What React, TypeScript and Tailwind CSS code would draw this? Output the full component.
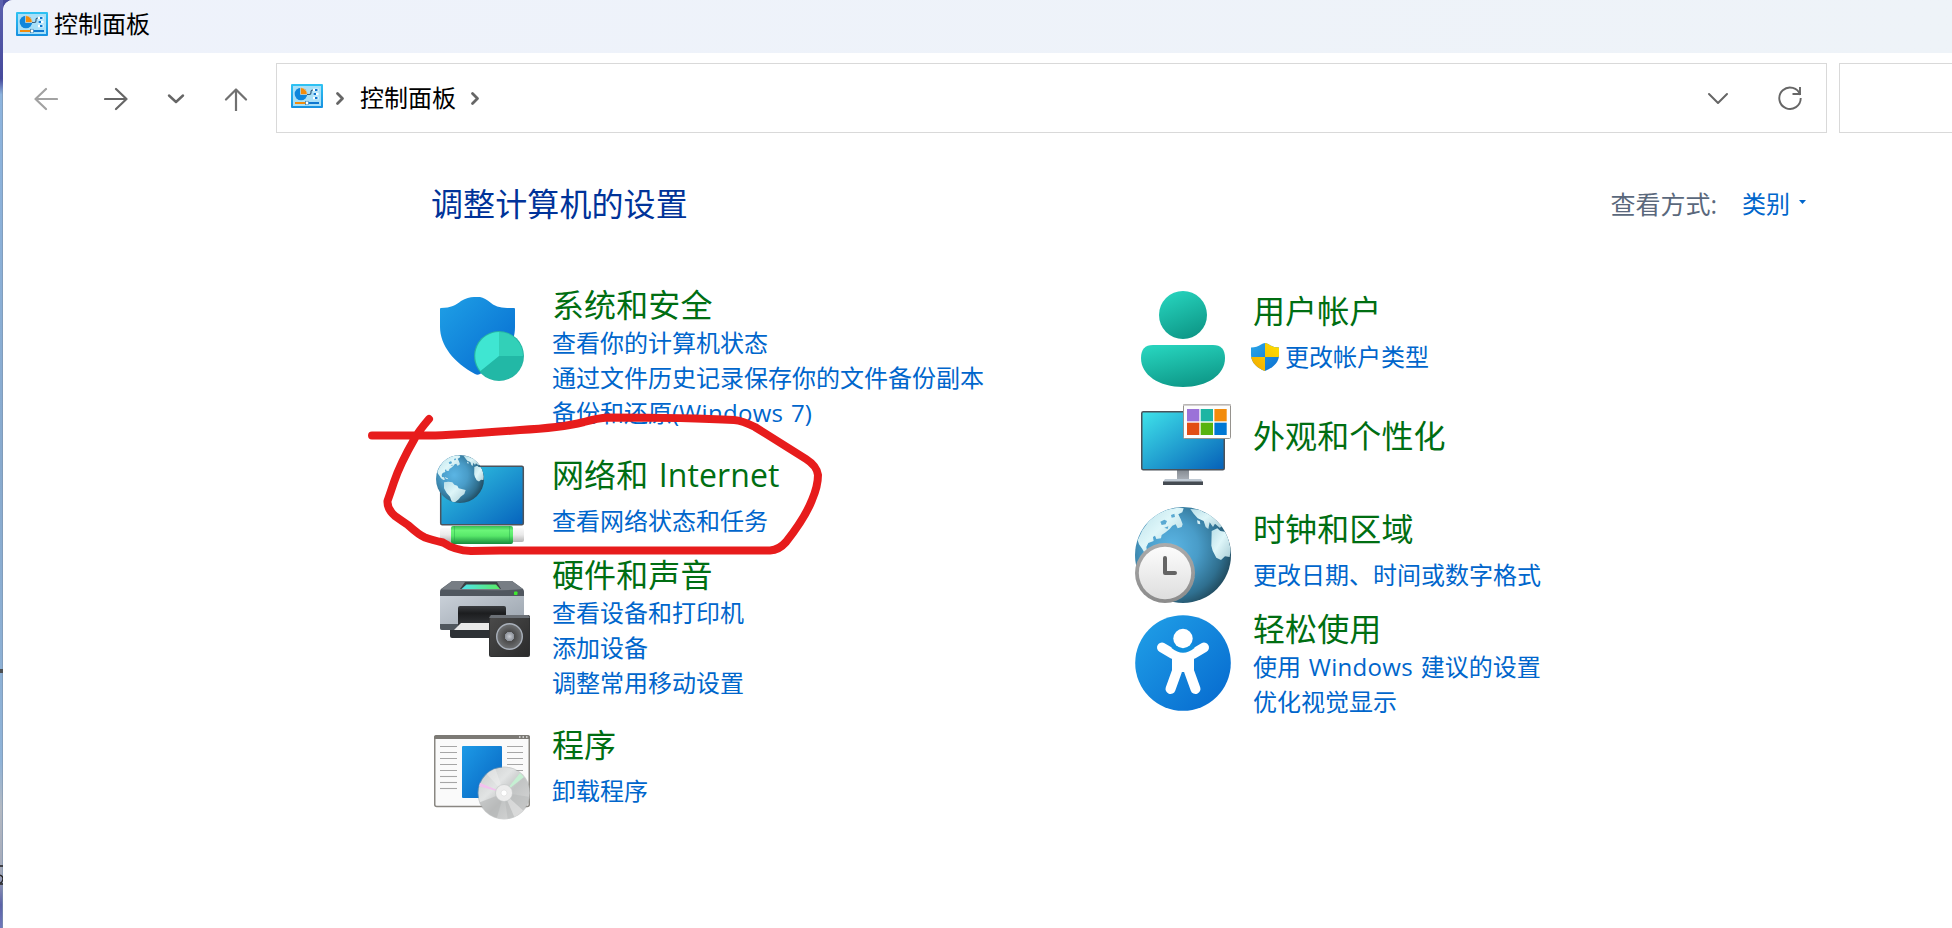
import type { ReactNode } from "react";

const LAND = [
  "M66 22 L96 8 L128 2 L146 4 L142 16 L130 22 L137 36 L143 52 L140 60 L128 64 L122 52 L112 56 L104 66 L92 76 L80 84 L78 94 L64 96 L60 86 L54 90 L56 102 L40 108 L34 120 L36 132 L48 134 L54 148 L44 150 L30 140 L22 126 L12 112 L8 100 L22 70 L42 42 Z",
  "M48 164 L74 160 L98 164 L110 178 L128 184 L136 200 L178 210 L170 234 L148 250 L136 266 L118 280 L98 286 L90 268 L84 250 L64 228 L48 200 Z",
  "M166 6 L196 8 L206 16 L228 22 L248 44 L262 58 L254 62 L240 50 L234 60 L224 46 L220 66 L212 60 L206 42 L188 34 L176 20 Z",
  "M230 72 L247 64 L256 72 L270 74 L280 94 L287 128 L284 150 L270 148 L258 159 L244 152 L233 131 L229 116 Z",
];

function Globe({ id }: { id: string }) {
  return (
    <g>
      <defs>
        <radialGradient id={id} cx="38%" cy="42%" r="70%">
          <stop offset="0" stopColor="#5bb5e4" />
          <stop offset="0.4" stopColor="#499cc8" />
          <stop offset="0.75" stopColor="#2f6f8f" />
          <stop offset="1" stopColor="#1b3c4b" />
        </radialGradient>
        <linearGradient id={id + "-land"} x1="0" y1="0" x2="1" y2="1">
          <stop offset="0" stopColor="#b9dfe8" />
          <stop offset="0.45" stopColor="#def6f9" />
          <stop offset="1" stopColor="#a9cdd6" />
        </linearGradient>
        <clipPath id={id + "-clip"}>
          <circle cx="144" cy="144" r="144" />
        </clipPath>
      </defs>
      <circle cx="144" cy="144" r="144" fill={`url(#${id})`} />
      <g clipPath={`url(#${id}-clip)`}>
        {LAND.map((d) => (
          <path key={d} d={d} fill={`url(#${id}-land)`} />
        ))}
        <path d="M76 44 L88 38 L96 42 L92 52 L80 54 Z M108 24 L118 20 L120 30 L110 32 Z M88 62 L100 58 L98 66 Z" fill="#5aa9d2" />
        <path d="M52 132 L70 140 L74 146 L60 142 Z M186 40 L194 42 L196 52 L188 50 Z" fill="#d6eff5" />
      </g>
    </g>
  );
}

function Icon({ children, className = "" }: { children: ReactNode; className?: string }) {
  return (
    <svg viewBox="0 0 96 96" className={`h-24 w-24 shrink-0 ${className}`}>
      {children}
    </svg>
  );
}

function SecurityIcon() {
  return (
    <Icon className="mt-1.5">
      <defs>
        <linearGradient id="sec" x1="0" y1="0" x2="1" y2="1">
          <stop offset="0" stopColor="#1fa0e6" />
          <stop offset="1" stopColor="#0569cf" />
        </linearGradient>
      </defs>
      <path d="M6 18 Q6 17 7 17 C17 17 22 14 27 10 Q34 6 40 6 H46 Q51 7 57 12 C63 17 70 17 80 17 Q81 17 81 18 V36 C81 58 64 74 46 83 Q43.500 84.500 41 83 C20 72 6 54 6 36 Z" fill="url(#sec)" />
      <circle cx="65" cy="65" r="25" fill="#28b5a4" />
      <circle cx="65" cy="65" r="24" fill="#22b8a6" />
      <path d="M65 65 V41 A24 24 0 0 1 89 65 Z" fill="#32d0b8" />
      <path d="M65 65 V41 A24 24 0 0 0 46.500 80 Z" fill="#3fe6d2" />
    </Icon>
  );
}

function NetworkIcon() {
  return (
    <Icon>
      <defs>
        <linearGradient id="net" x1="0" y1="0" x2="1" y2="1">
          <stop offset="0" stopColor="#35cbe4" />
          <stop offset="1" stopColor="#0663bd" />
        </linearGradient>
        <linearGradient id="cable" x1="0" y1="0" x2="0" y2="1">
          <stop offset="0" stopColor="#38bd55" />
          <stop offset="0.25" stopColor="#6af578" />
          <stop offset="0.55" stopColor="#58e86a" />
          <stop offset="1" stopColor="#168a3c" />
        </linearGradient>
        <linearGradient id="plug" x1="0" y1="0" x2="0" y2="1">
          <stop offset="0" stopColor="#fafafa" />
          <stop offset="0.5" stopColor="#e9e9e9" />
          <stop offset="1" stopColor="#b5b5b5" />
        </linearGradient>
      </defs>
      <rect x="6.700" y="15.200" width="82.600" height="58.600" rx="1.500" fill="url(#net)" stroke="#4c535c" strokeWidth="1.500" />
      <rect x="6" y="77" width="84" height="14" rx="2" fill="url(#plug)" />
      <rect x="17" y="75" width="62" height="18" rx="2" fill="url(#cable)" />
      <path d="M20.500 75 V93 M75.500 75 V93" stroke="#1f9d45" strokeOpacity="0.500" strokeWidth="0.800" />
      <g transform="translate(2 4) scale(0.166667)">
        <Globe id="globe-net" />
      </g>
    </Icon>
  );
}

function HardwareIcon() {
  return (
    <Icon className="mt-4">
      <defs>
        <linearGradient id="prn" x1="0" y1="0" x2="1" y2="1">
          <stop offset="0" stopColor="#ccd3db" />
          <stop offset="1" stopColor="#98a1ab" />
        </linearGradient>
        <linearGradient id="scr" x1="0" x2="1">
          <stop offset="0" stopColor="#4fe3ee" />
          <stop offset="1" stopColor="#58ea62" />
        </linearGradient>
        <linearGradient id="slot" x1="0" y1="0" x2="0" y2="1">
          <stop offset="0" stopColor="#3a3d40" />
          <stop offset="0.300" stopColor="#1c1d1f" />
          <stop offset="1" stopColor="#3c3f43" />
        </linearGradient>
        <linearGradient id="spk" x1="0" y1="0" x2="1" y2="1">
          <stop offset="0" stopColor="#4a4a4a" />
          <stop offset="1" stopColor="#2b2b2b" />
        </linearGradient>
        <radialGradient id="cone">
          <stop offset="0" stopColor="#c9ccd2" />
          <stop offset="0.360" stopColor="#8b9098" />
          <stop offset="0.370" stopColor="#4a4a4a" />
          <stop offset="1" stopColor="#707274" />
        </radialGradient>
      </defs>
      <path d="M6 20 H90 V56 Q90 59 87 59 H8 Q6 59 6 57 Z" fill="url(#prn)" />
      <path d="M6 53 H25 V59 H8 Q6 59 6 57 Z" fill="#50575e" />
      <path d="M18 10 H78 L89 18 Q90 19 90 21 V25 H6 V21 Q6 19 7 18 Z" fill="#50575f" />
      <path d="M18 10 H78 L89 18 Q80 20 7 18.500 Z" fill="#777d84" />
      <path d="M31 11 H63 L67 18 H26 Z" fill="#3b4045" />
      <path d="M32.500 13.500 H62 L66 18 H27.500 Z" fill="url(#scr)" />
      <rect x="80" y="20.500" width="3.500" height="3.500" rx="0.800" fill="#3eea2f" />
      <rect x="24" y="35" width="48" height="24" rx="2" fill="url(#slot)" />
      <path d="M16 59 H60 V67 H18 Q16 67 16 65 Z" fill="#2d3135" />
      <path d="M27 52 H66 V59 H20 Z" fill="#e9e9e9" />
      <rect x="55" y="44" width="41" height="42" rx="2" fill="#303132" />
      <path d="M57 44 H94 L96 47 H55 Z" fill="#6b7076" />
      <rect x="56" y="47" width="39" height="38" rx="1" fill="url(#spk)" />
      <circle cx="75.500" cy="65.500" r="12.800" fill="url(#cone)" stroke="#a9b0ba" strokeWidth="1.400" />
    </Icon>
  );
}

function ProgramsIcon() {
  const rows = [0, 1, 2, 3, 4, 5, 6, 7];
  return (
    <Icon className="mt-1.5">
      <defs>
        <linearGradient id="prg" x1="0" y1="0" x2="1" y2="1">
          <stop offset="0" stopColor="#1d9ae6" />
          <stop offset="1" stopColor="#0663c0" />
        </linearGradient>
        <linearGradient id="disc" x1="0" y1="0" x2="1" y2="1">
          <stop offset="0" stopColor="#c7c9c9" />
          <stop offset="0.350" stopColor="#e2e4e4" />
          <stop offset="0.550" stopColor="#c2c4c4" />
          <stop offset="1" stopColor="#dadada" />
        </linearGradient>
        <clipPath id="disc-clip">
          <circle cx="70" cy="62" r="26" />
        </clipPath>
      </defs>
      <rect x="0.750" y="5" width="94.500" height="70.500" rx="2" fill="#fafafa" stroke="#8a8782" strokeWidth="1.500" />
      <path d="M0 8 V6 Q0 4 2 4 H94 Q96 4 96 6 V8 Z" fill="#7c7a75" />
      <path d="M85 6 h1.500 M88.500 6 h1.500 M92 6 h1.500" stroke="#e5e5e5" strokeWidth="1.500" />
      {rows.map((r) => (
        <path key={r} d={`M6 ${15.5 + r * 6} H23 ${r < 5 ? `M73 ${15.5 + r * 6} H89` : ""}`} stroke="#a6a6a6" strokeWidth="1.100" />
      ))}
      <rect x="28" y="15" width="40" height="52" rx="1" fill="url(#prg)" />
      <circle cx="70" cy="62" r="26.500" fill="#9fa3a3" opacity="0.500" />
      <circle cx="70" cy="62" r="25.600" fill="url(#disc)" />
      <g clipPath="url(#disc-clip)">
        <path d="M70 62 L96 66 V90 H74 Z" fill="#b4b6b6" opacity="0.450" />
        <path d="M70 62 L44 72 L48 90 H62 Z" fill="#b2b4b4" opacity="0.600" />
        <path d="M70 62 L82 90 L92 82 Z" fill="#f0f0f0" opacity="0.500" />
        <path d="M70 62 L50 40 L60 34 Z" fill="#f2f2f2" opacity="0.400" />
        <path d="M70 62 L44 51 L44 55 Z" fill="#f3c1ee" />
        <path d="M70 62 L86 42 L90 46 Z" fill="#c5efd2" />
      </g>
      <circle cx="70" cy="62" r="8.500" fill="#ececec" stroke="#bfc2c2" strokeWidth="0.600" />
      <circle cx="70" cy="62" r="3" fill="#fff" stroke="#dcdcdc" strokeWidth="0.600" />
    </Icon>
  );
}

function UserIcon() {
  return (
    <Icon>
      <defs>
        <linearGradient id="usr" x1="0.300" y1="0" x2="0.700" y2="1">
          <stop offset="0" stopColor="#26d2bc" />
          <stop offset="1" stopColor="#0d9686" />
        </linearGradient>
      </defs>
      <circle cx="48" cy="24" r="24" fill="url(#usr)" />
      <path d="M18 54 H78 Q90 54 90 67 C90 84 72 96 48 96 S6 84 6 67 Q6 54 18 54 Z" fill="url(#usr)" />
    </Icon>
  );
}

function AppearanceIcon() {
  const tiles = ["#9b72d8", "#1db5a3", "#f28c0c", "#e24e14", "#57b30f", "#0078d4"];
  return (
    <Icon>
      <defs>
        <linearGradient id="mon" x1="0" y1="0" x2="1" y2="1">
          <stop offset="0" stopColor="#3fe3ea" />
          <stop offset="1" stopColor="#0660b8" />
        </linearGradient>
        <linearGradient id="stand" x1="0" y1="0" x2="0" y2="1">
          <stop offset="0" stopColor="#858b92" />
          <stop offset="1" stopColor="#aab0b8" />
        </linearGradient>
      </defs>
      <rect x="42" y="75" width="12" height="10" fill="url(#stand)" />
      <path d="M30 84 H66 L68 87 H28 Z" fill="#bfc9d3" />
      <rect x="28" y="86.500" width="40" height="3.500" fill="#454b52" />
      <rect x="6.750" y="16.750" width="82.500" height="58" rx="1.500" fill="url(#mon)" stroke="#4b525a" strokeWidth="1.500" />
      <rect x="48.500" y="9.500" width="47" height="34" rx="1" fill="#fdfdfd" stroke="#96938e" />
      <path d="M48 10 H96" stroke="#c4c2c0" strokeWidth="1.500" />
      {tiles.map((c, i) => (
        <rect key={c} x={52 + (i % 3) * 13.7} y={14 + Math.floor(i / 3) * 13.7} width="12.300" height="12.300" fill={c} />
      ))}
    </Icon>
  );
}

function ClockIcon() {
  return (
    <Icon>
      <defs>
        <linearGradient id="face" x1="0" y1="0" x2="0" y2="1">
          <stop offset="0" stopColor="#fcfcfc" />
          <stop offset="1" stopColor="#dedede" />
        </linearGradient>
        <linearGradient id="rim" x1="0" y1="0" x2="0" y2="1">
          <stop offset="0" stopColor="#ababab" />
          <stop offset="1" stopColor="#8b8b8b" />
        </linearGradient>
      </defs>
      <g transform="scale(0.333333)">
        <Globe id="globe-clock" />
      </g>
      <circle cx="30" cy="66" r="30" fill="url(#rim)" />
      <circle cx="30" cy="66" r="26.200" fill="url(#face)" />
      <path d="M30 51 V66 H40" fill="none" stroke="#646464" strokeWidth="4" strokeLinecap="round" strokeLinejoin="round" />
    </Icon>
  );
}

function AccessIcon() {
  return (
    <Icon className="mt-1.5">
      <defs>
        <linearGradient id="acc" x1="0" y1="0" x2="1" y2="1">
          <stop offset="0" stopColor="#21a1e8" />
          <stop offset="1" stopColor="#0568ce" />
        </linearGradient>
      </defs>
      <circle cx="48" cy="48" r="47.800" fill="url(#acc)" />
      <path d="M27 32.500 L38 39 H58 L69 32.500" fill="none" stroke="#fff" strokeWidth="10" strokeLinecap="round" strokeLinejoin="round" />
      <path d="M37 38 H59 V57 H37 Z" fill="#fff" />
      <path d="M42 56 L35.500 74 M54 56 L60.500 74" stroke="#fff" strokeWidth="10" strokeLinecap="round" />
      <path d="M36.500 33 Q48 42.500 59.500 33 L58 29 H38 Z" fill="#1190de" />
      <circle cx="48" cy="23.500" r="9.700" fill="#fff" />
    </Icon>
  );
}

function UacShield() {
  return (
    <svg viewBox="0 0 28 28" className="mr-[6px] h-7 w-7 shrink-0">
      <defs>
        <clipPath id="uac">
          <path d="M0 4.500 Q6 4.500 10 1.500 Q14 -1.500 18 1.500 Q22 4.500 28 4.500 V12 C28 20 21 25.500 14 28 C7 25.500 0 20 0 12 Z" />
        </clipPath>
        <linearGradient id="uac-b" x1="0" y1="0" x2="1" y2="1">
          <stop offset="0" stopColor="#2ba6e8" />
          <stop offset="1" stopColor="#0b6fd0" />
        </linearGradient>
        <linearGradient id="uac-y" x1="1" y1="0" x2="0" y2="1">
          <stop offset="0" stopColor="#ffe000" />
          <stop offset="1" stopColor="#f2a800" />
        </linearGradient>
      </defs>
      <g clipPath="url(#uac)">
        <rect width="28" height="28" fill="url(#uac-b)" />
        <path d="M14 -1 H28 V14 H0 V28 H14 Z" fill="url(#uac-y)" />
      </g>
    </svg>
  );
}

function PanelIcon() {
  return (
    <svg viewBox="0 0 32 24" className="h-6 w-8 shrink-0">
      <defs>
        <linearGradient id="pnl" x1="0" y1="0" x2="0" y2="1">
          <stop offset="0" stopColor="#2fc3f3" />
          <stop offset="1" stopColor="#1690e0" />
        </linearGradient>
      </defs>
      <rect width="32" height="24" rx="1" fill="url(#pnl)" />
      <rect x="2" y="2" width="28" height="20" fill="#a8e0f8" />
      <circle cx="10" cy="10" r="6.300" fill="#0f86dc" />
      <path d="M9.500 10.500 V3.500 A7 7 0 0 1 16.300 10.500 Z" fill="#f28c0c" stroke="#d8f2fc" strokeWidth="0.600" />
      <path d="M16 10.500 H18.500 Q20 10.500 20 8.500 V7.500 Q20 6 22 6 H26" fill="none" stroke="#3a5f7c" strokeWidth="1.200" />
      <path d="M22 6 H27.500 M22 10 H27.500 M22 14 H27.500" stroke="#fff" strokeWidth="2.400" />
      <path d="M24 6 h2.500 M22.500 10 h2.500 M24 14 h2.500" stroke="#0f78d0" strokeWidth="1.800" />
      <path d="M4 19 H15" stroke="#f28c0c" strokeWidth="2" />
      <path d="M17 19 H28" stroke="#0f78d0" strokeWidth="2" />
      <rect x="14.700" y="17.200" width="2.800" height="3.600" fill="#fff" stroke="#1b6fae" strokeWidth="0.500" />
    </svg>
  );
}

function Stroke({ d, className, width = 2.2 }: { d: string; className: string; width?: number }) {
  return (
    <svg viewBox="0 0 24 24" className={`h-6 w-6 shrink-0 ${className}`} fill="none" stroke="currentColor" strokeWidth={width} strokeLinecap="round" strokeLinejoin="round">
      <path d={d} />
    </svg>
  );
}

function Mixed({ text }: { text: string }) {
  return text.split(/([A-Za-z]+)/).map((part, i) =>
    /^[A-Za-z]/.test(part) ? (
      <span key={i} className="tracking-[0.3px]">
        {part}
      </span>
    ) : (
      part
    ),
  );
}

interface CategoryProps {
  icon: ReactNode;
  title: string;
  links?: string[];
  row: string;
  text?: string;
  spaced?: boolean;
  shield?: boolean;
}

function Category({ icon, title, links = [], row, text = "", spaced, shield }: CategoryProps) {
  return (
    <section className={`flex gap-[22px] whitespace-nowrap ${row}`}>
      {icon}
      <div className={text}>
        <h2 className="h-10 text-[32px] leading-10 tracking-[0.1px] text-[#006e12] [word-spacing:2px]">{title}</h2>
        <ul className={spaced ? "mt-2" : ""}>
          {links.map((l) => (
            <li key={l} className={`flex h-[35px] items-center text-2xl leading-[35px] text-[#0066cc] [word-spacing:1.5px] ${shield ? "-ml-[2px]" : ""}`}>
              {shield && <UacShield />}
              <a>
                <Mixed text={l} />
              </a>
            </li>
          ))}
        </ul>
      </div>
    </section>
  );
}

export default function App() {
  return (
    <div className="relative flex h-[928px] w-[1952px] overflow-hidden bg-[#464a9c] font-['Open_Sans','Noto_Sans_CJK_SC',sans-serif]">
      <svg viewBox="0 0 3 928" className="h-full w-[3px] shrink-0">
        <defs>
          <linearGradient id="edge" x1="0" y1="0" x2="0" y2="1">
            <stop offset="0" stopColor="#5a60ae" />
            <stop offset="0.085" stopColor="#464a9c" />
            <stop offset="0.102" stopColor="#8db4de" />
            <stop offset="0.500" stopColor="#88aace" />
            <stop offset="0.820" stopColor="#8fb3d8" />
            <stop offset="0.870" stopColor="#b3b9c2" />
            <stop offset="0.940" stopColor="#a4a9ba" />
            <stop offset="0.975" stopColor="#5c63a8" />
            <stop offset="1" stopColor="#6f78bb" />
          </linearGradient>
        </defs>
        <rect width="3" height="928" fill="url(#edge)" />
        <rect x="2" y="90" width="1" height="838" fill="#7d93ab" opacity="0.600" />
        <path d="M0 669 H3 V673 H0 Z" fill="#4d4f52" />
        <path d="M0 866 H3 M0 884 H3" stroke="#3e4046" strokeWidth="2" />
        <path d="M0 875 Q3 876 3 879 Q2 883 0 883" fill="none" stroke="#222" strokeWidth="1.200" />
      </svg>

      <main className="flex min-w-0 flex-1 flex-col overflow-hidden rounded-tl-[10px] bg-white">
        <header className="flex h-[53px] shrink-0 items-start gap-[6px] bg-linear-to-r from-[#eef2fb] to-[#eef3f8] pl-[13px] pt-3">
          <PanelIcon />
          <h1 className="h-6 text-2xl leading-[24px] text-black">控制面板</h1>
        </header>

        <nav className="mt-[10px] flex h-[70px] shrink-0 items-center">
          <div className="flex w-[273px] shrink-0 items-center pl-[31px] pt-[2px]">
            <Stroke className="text-[#a2a2a2]" d="M23 12 H1.500 M12 2 L1.500 12 L12 22" />
            <Stroke className="ml-[46px] text-[#666]" d="M1 12 H22.500 M12 2 L22.500 12 L12 22" />
            <Stroke className="ml-9 text-[#666]" width={2.4} d="M5 8.500 L12 15 L19 8.500" />
            <Stroke className="ml-9 text-[#707070]" d="M12 24 V2.500 M2 12.500 L12 2.500 L22 12.500" />
          </div>
          <div className="flex h-[70px] w-[1551px] shrink-0 items-center border border-[#d9d9d9] bg-white pl-[14px]">
            <div className="-mt-1">
              <PanelIcon />
            </div>
            <Stroke className="ml-[5px] text-[#666]" width={2.8} d="M9.500 7.500 L14.500 12.500 L9.500 17.500" />
            <span className="ml-[8px] text-2xl leading-[24px] text-black">控制面板</span>
            <Stroke className="ml-[7px] text-[#666]" width={2.8} d="M9.500 7.500 L14.500 12.500 L9.500 17.500" />
            <Stroke className="ml-auto text-[#666]" width={2} d="M3 8 L12 17 L21 8" />
            <svg viewBox="0 0 24 24" className="ml-12 mr-[24px] h-6 w-6 shrink-0 text-[#666]" fill="none" stroke="currentColor" strokeWidth="1.900">
              <path d="M22.200 9 A10.700 10.700 0 1 0 22.700 12" />
              <path d="M22 1 V8 H14.500" />
            </svg>
          </div>
          <div className="ml-3 h-[70px] w-[130px] shrink-0 border border-[#d9d9d9] bg-white" />
        </nav>

        <div className="mt-[47px] flex h-12 shrink-0 items-center whitespace-nowrap pl-[428px]">
          <h2 className="text-[32px] leading-[48px] tracking-[0.1px] text-[#003399]">调整计算机的设置</h2>
          <div className="ml-auto flex items-center pr-[146px]">
            <span className="text-[25px] leading-[48px] text-[#5a687c]">查看方式:</span>
            <a className="ml-[25px] text-2xl leading-[48px] text-[#0066cc]">类别</a>
            <svg viewBox="0 0 7 4" className="-mt-1 ml-[9px] h-1 w-[7px]">
              <path d="M0 0 H7 L3.500 4 Z" fill="#0066cc" />
            </svg>
          </div>
        </div>

        <div className="mt-[57px] grid grid-cols-[701px_1fr] pl-[431px]">
          <div className="flex flex-col">
            <Category icon={<SecurityIcon />} row="h-[166px]" title="系统和安全" links={["查看你的计算机状态", "通过文件历史记录保存你的文件备份副本", "备份和还原(Windows 7)"]} />
            <Category icon={<NetworkIcon />} row="h-[104px]" text="mt-1" spaced title="网络和 Internet" links={["查看网络状态和任务"]} />
            <Category icon={<HardwareIcon />} row="h-[170px]" title="硬件和声音" links={["查看设备和打印机", "添加设备", "调整常用移动设置"]} />
            <Category icon={<ProgramsIcon />} row="h-[104px]" spaced title="程序" links={["卸载程序"]} />
          </div>
          <div className="flex flex-col pt-1.5">
            <Category icon={<UserIcon />} row="h-[104px]" spaced shield title="用户帐户" links={["更改帐户类型"]} />
            <Category icon={<AppearanceIcon />} row="h-[112px]" text="mt-[21px]" title="外观和个性化" />
            <Category icon={<ClockIcon />} row="h-[102px]" text="mt-[2px]" spaced title="时钟和区域" links={["更改日期、时间或数字格式"]} />
            <Category icon={<AccessIcon />} row="h-[110px]" title="轻松使用" links={["使用 Windows 建议的设置", "优化视觉显示"]} />
          </div>
        </div>
      </main>

      <svg viewBox="360 400 480 170" className="pointer-events-none absolute left-[360px] top-[400px] h-[170px] w-[480px]">
        <path
          d="M429 419 Q418 432 415 438 Q400 464 394 482 Q391 491 387.500 501 Q387 509 395 516 Q402 521 408 525 Q419 535 425 537.500 Q432 540 443 542.500 Q455 550.500 471 551 L500 550.500 H770 Q779 550 786 542 Q805 518 812 500 Q818 486 818 475 Q817 466 806 459 L755 427 Q742 420.500 734 420 Q690 417.500 608 417.500 Q598 418 584 422 Q560 428 520 430 Q450 435.500 430 435.500 H372"
          fill="none"
          stroke="#e71c1c"
          strokeWidth="8"
          strokeLinecap="round"
          strokeLinejoin="round"
        />
      </svg>
    </div>
  );
}
